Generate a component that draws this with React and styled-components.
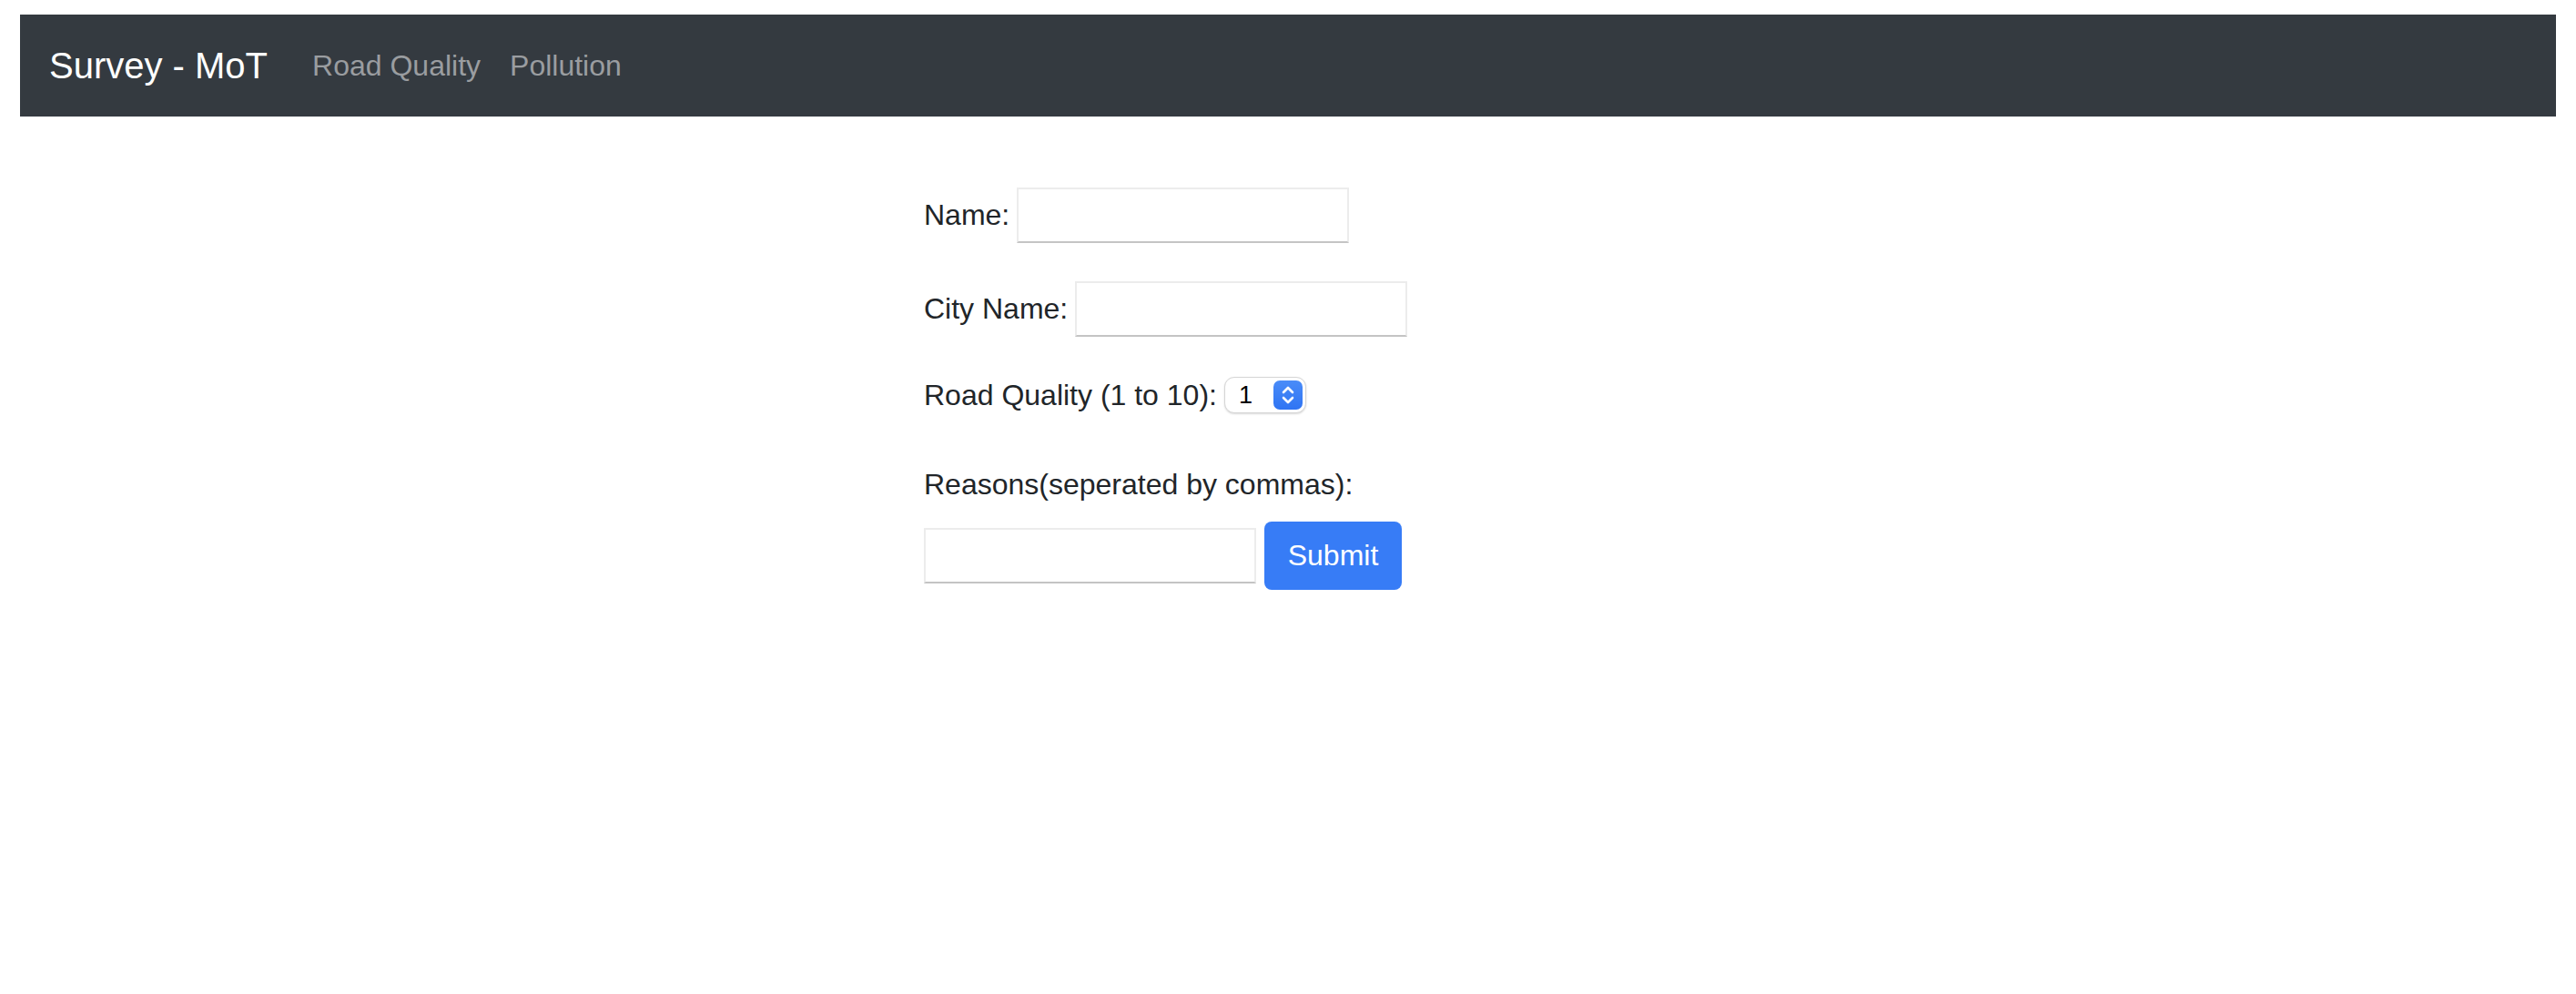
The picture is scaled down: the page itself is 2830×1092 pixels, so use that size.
import React from 'react'
import styled, { createGlobalStyle } from 'styled-components'

const GlobalStyle = createGlobalStyle`
    html, body {
        background: #fff;
    }
    body {
        margin: 16px 22px 0;
        font-family: "Liberation Sans", Arial, Helvetica, sans-serif;
        color: #212529;
    }
`

const App = () => {
    return (
        <>
            <GlobalStyle />
            <Navbar>
                <Brand>Survey - MoT</Brand>
                <NavLink>Road Quality</NavLink>
                <NavLink>Pollution</NavLink>
            </Navbar>
            <Main>
                <Row top={78}>
                    <Label>Name:</Label>
                    <Input type="text" />
                </Row>
                <Row top={42}>
                    <Label>City Name:</Label>
                    <Input type="text" />
                </Row>
                <Row top={44}>
                    <Label>Road Quality (1 to 10):</Label>
                    <SelectWrap>
                        <Select defaultValue="1">
                            {[1, 2, 3, 4, 5, 6, 7, 8, 9, 10].map(n => (
                                <option key={n} value={n}>{n}</option>
                            ))}
                        </Select>
                        <Stepper>
                            <svg width="18" height="24" viewBox="0 0 18 24" fill="none"
                                stroke="#fff" strokeWidth="2.6" strokeLinecap="round" strokeLinejoin="round">
                                <path d="M4 9 L9 4 L14 9" />
                                <path d="M4 15 L9 20 L14 15" />
                            </svg>
                        </Stepper>
                    </SelectWrap>
                </Row>
                <Row top={60}>
                    <Label>Reasons(seperated by commas):</Label>
                </Row>
                <Row top={22}>
                    <Input type="text" />
                    <SubmitBtn>Submit</SubmitBtn>
                </Row>
            </Main>
        </>
    )
}

export default App

const Navbar = styled.nav`
    height: 112px;
    background-color: #343a40;
    display: flex;
    align-items: center;
    padding: 0 32px;
    box-sizing: border-box;
`

const Brand = styled.a`
    font-size: 40px;
    color: #fff;
    margin-right: 33px;
    white-space: nowrap;
`

const NavLink = styled.a`
    font-size: 32px;
    color: #9a9da0;
    padding: 0 16px;
    white-space: nowrap;
`

const Main = styled.form`
    display: flex;
    flex-direction: column;
    padding-left: 993px;
`

const Row = styled.div`
    display: flex;
    align-items: center;
    gap: 8px;
    margin-top: ${props => props.top}px;
    font-size: 32px;
    line-height: 37px;
`

const Label = styled.label`
    white-space: nowrap;
`

const Input = styled.input`
    width: 365px;
    height: 61px;
    box-sizing: border-box;
    border: 2px solid #ececec;
    border-bottom-color: #c4c4c4;
    border-radius: 0;
    background: #fff;
    font-size: 26px;
    font-family: inherit;
    padding: 0 6px;
    outline: none;
`

const SelectWrap = styled.div`
    position: relative;
    width: 90px;
    height: 40px;
`

const Select = styled.select`
    appearance: none;
    -webkit-appearance: none;
    width: 100%;
    height: 100%;
    box-sizing: border-box;
    border: 1px solid #d6d6d6;
    border-radius: 11px;
    box-shadow: 0 1px 2px rgba(0, 0, 0, 0.15);
    background: #fff;
    font-family: "Liberation Sans", Arial, sans-serif;
    font-size: 27px;
    color: #000;
    padding: 0 0 0 15px;
    outline: none;
`

const Stepper = styled.span`
    position: absolute;
    top: 4px;
    right: 4px;
    width: 32px;
    height: 32px;
    border-radius: 7px;
    background: linear-gradient(#4a8cf8, #2f74f3);
    display: flex;
    align-items: center;
    justify-content: center;
    pointer-events: none;
`

const SubmitBtn = styled.button`
    height: 75px;
    width: 151px;
    margin-left: 1px;
    box-sizing: border-box;
    border: none;
    border-radius: 8px;
    background-color: #377cf6;
    color: #fff;
    font-family: inherit;
    font-size: 32px;
    cursor: pointer;
`
